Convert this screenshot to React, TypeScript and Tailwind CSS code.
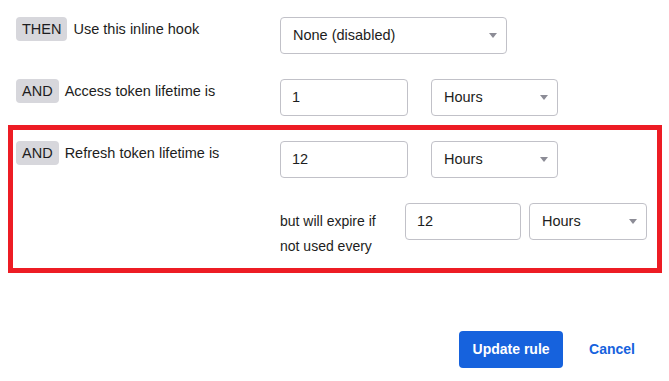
const font = { fontFamily: '"Liberation Sans", Arial, sans-serif' };

function Badge({ children }: { children: string }) {
  return (
    <span className="h-6 shrink-0 rounded bg-[#d7d7dc] px-[6px] text-[14.5px] leading-6 text-[#1d1d21]">
      {children}
    </span>
  );
}

function Caret() {
  return (
    <svg width="8" height="5" viewBox="0 0 8 5" className="shrink-0">
      <path d="M0 0h8L4 5z" fill="#8c8c96" />
    </svg>
  );
}

function Select({ value, width }: { value: string; width: string }) {
  return (
    <div
      className={`flex h-[37px] ${width} items-center justify-between rounded border border-[#c1c1c8] bg-white pl-[12px] pr-[9px] text-[14.5px] text-[#1d1d21]`}
    >
      <span>{value}</span>
      <Caret />
    </div>
  );
}

function Input({ value, width }: { value: string; width: string }) {
  return (
    <div
      className={`flex h-[37px] ${width} items-center rounded border border-[#c1c1c8] bg-white px-[11px] text-[14.5px] text-[#1d1d21]`}
    >
      {value}
    </div>
  );
}

function Label({ badge, text }: { badge: string; text: string }) {
  return (
    <div className="flex w-[264px] shrink-0 items-start gap-[6px]">
      <Badge>{badge}</Badge>
      <span className="text-[14.5px] leading-6 text-[#1d1d21]">{text}</span>
    </div>
  );
}

export default function App() {
  return (
    <div className="h-[381px] w-[669px] bg-white pt-[17px]" style={font}>
      <div className="flex pl-[16px]">
        <Label badge="THEN" text="Use this inline hook" />
        <Select value="None (disabled)" width="w-[227px]" />
      </div>

      <div className="mt-[25px] flex pl-[16px]">
        <Label badge="AND" text="Access token lifetime is" />
        <div className="flex gap-[23px]">
          <Input value="1" width="w-[128px]" />
          <Select value="Hours" width="w-[127px]" />
        </div>
      </div>

      <div className="ml-[8px] mt-[9px] w-[654px] border-[5px] border-[#ed1c24] pb-[9px] pl-[3px] pt-[11px]">
        <div className="flex">
          <Label badge="AND" text="Refresh token lifetime is" />
          <div className="flex gap-[23px]">
            <Input value="12" width="w-[128px]" />
            <Select value="Hours" width="w-[127px]" />
          </div>
        </div>
        <div className="mt-[25px] flex pl-[264px]">
          <div className="w-[125px] pt-[6px] text-[14px] leading-[25px] text-[#1d1d21]">
            but will expire if
            <br />
            not used every
          </div>
          <div className="flex gap-[8px]">
            <Input value="12" width="w-[116px]" />
            <Select value="Hours" width="w-[118px]" />
          </div>
        </div>
      </div>

      <div className="mt-[58px] flex items-center justify-end gap-[26px] pr-[34px]">
        <button className="h-[37px] w-[104px] rounded bg-[#1662dd] text-[14px] font-bold text-white">
          Update rule
        </button>
        <span className="text-[14px] font-bold text-[#1662dd]">Cancel</span>
      </div>
    </div>
  );
}
